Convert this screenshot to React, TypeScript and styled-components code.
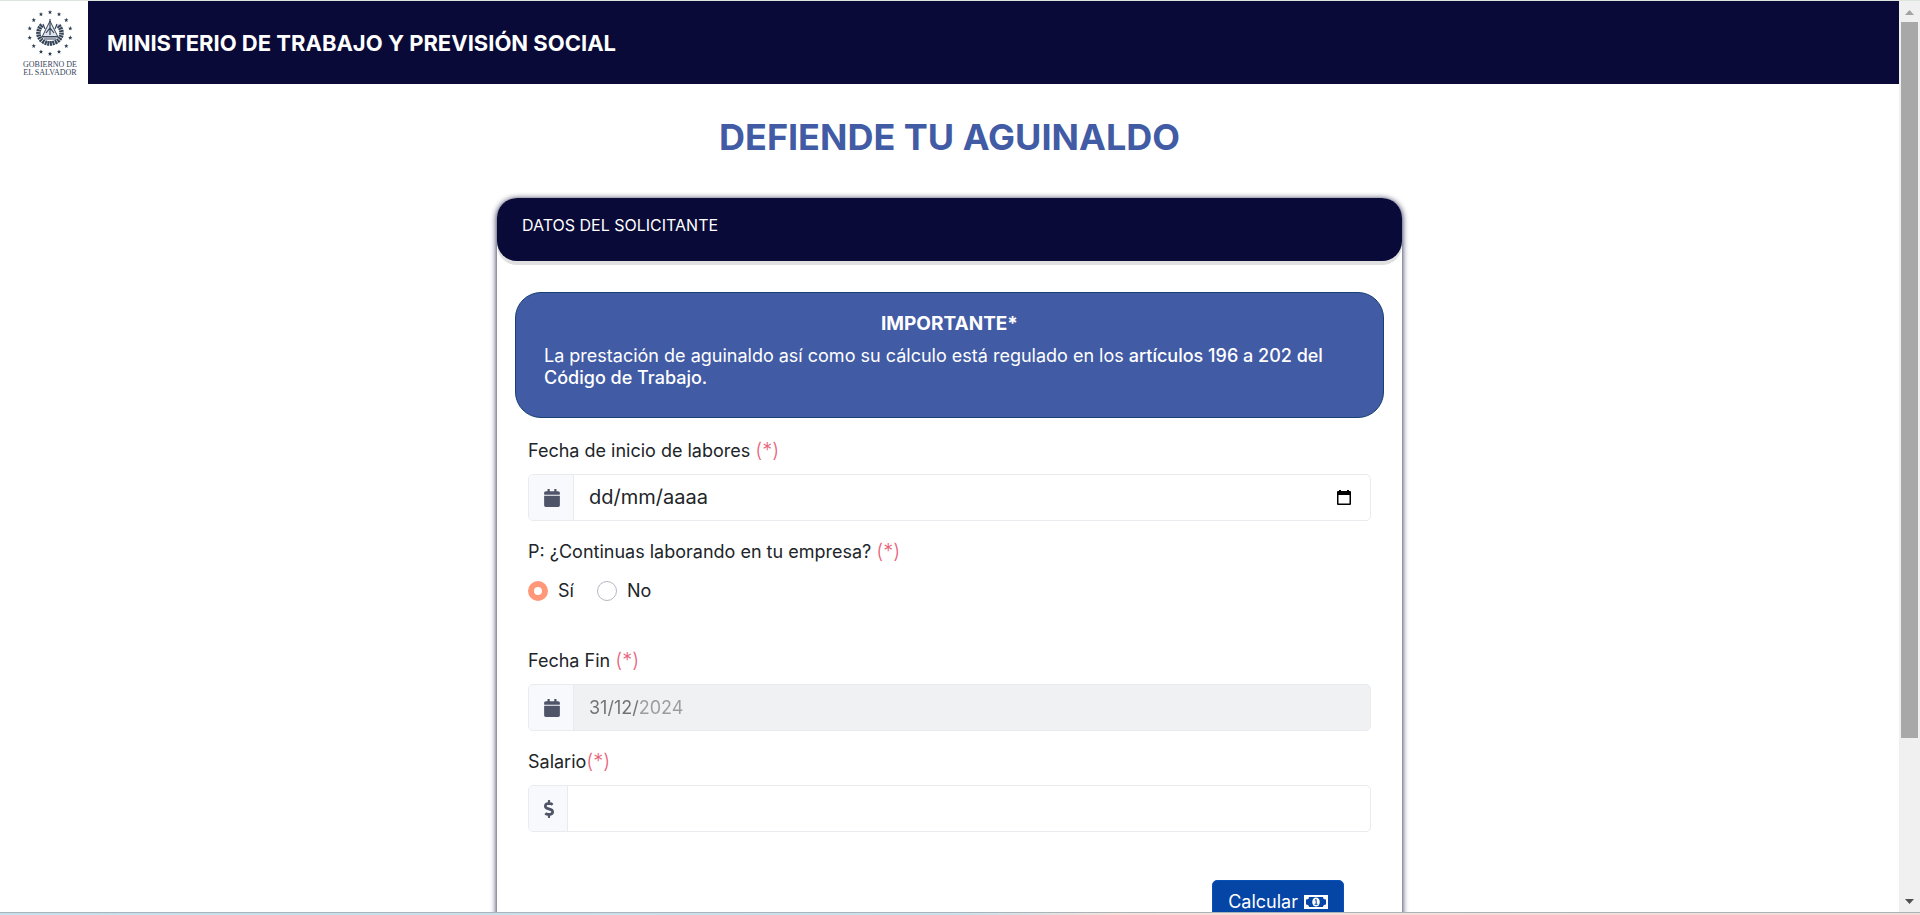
import React, { useState } from "react";
import styled, { createGlobalStyle } from "styled-components";
import { FaCalendar, FaDollarSign } from "react-icons/fa";

const GlobalStyle = createGlobalStyle`
  * { box-sizing: border-box; }
  body { margin: 0; background: #fff; }
  body, button, input { font-family: Inter, "Noto Sans", sans-serif; font-size: 18px; color: #212529; }
`;

const Shell = styled.div`
  display: grid;
  grid-template: minmax(0, 1fr) auto / minmax(0, 1fr) 21px;
  height: 100vh;
  border-top: 1px solid #dde3dd;
`;

const Viewport = styled.div`
  overflow: hidden;
`;

const EdgeStrip = styled.div`
  grid-column: 1 / -1;
  height: 3px;
  border-top: 1px solid #aab4ba;
  background: linear-gradient(90deg, #c3e0ec 0%, #c9e2ec 50%, #f6e0d8 58%, #f3dcd4 100%);
`;

const ScrollTrack = styled.div`
  display: flex;
  flex-direction: column;
  align-items: center;
  background: #f0f0f0;
`;

const ScrollArrow = styled.svg`
  width: 9px;
  height: 21px;
  flex: none;
`;

const ScrollThumb = styled.div`
  width: 17px;
  flex: 717 1 0;
  background: #a8a8a8;
`;

const ScrollRest = styled.div`
  flex: 153 1 0;
`;

const TopBar = styled.header`
  display: flex;
  height: 83px;
  background: #090a37;
`;

const LogoBox = styled.a`
  width: 88px;
  flex: none;
  padding: 5px 0 0 20px;
  background: #fff;
`;

const Ministry = styled.strong`
  align-self: center;
  margin-left: 19px;
  font-size: 22px;
  line-height: 32px;
  font-weight: 700;
  color: #fff;
`;

const Main = styled.main`
  display: flex;
  flex-direction: column;
  align-items: center;
  padding: 28px 16px;
`;

const PageTitle = styled.h1`
  margin: 0 0 36px;
  font-size: 36px;
  line-height: 50px;
  font-weight: 700;
  color: #415ba5;
`;

const Card = styled.form`
  width: 100%;
  max-width: 905px;
  border-radius: 20px;
  background: #fff;
  box-shadow: 0 1px 6px #090a37;
`;

const CardHeader = styled.h2`
  margin: 0;
  height: 63px;
  padding: 16px 25px;
  border-radius: 20px;
  background: #090a37;
  box-shadow: 0 4px 0 rgba(0, 0, 0, 0.12);
  font-size: 16px;
  line-height: 22px;
  font-weight: 400;
  color: #fff;
`;

const CardBody = styled.div`
  padding: 31px 18px 40px;
`;

const Notice = styled.section`
  height: 126px;
  padding: 20px 28px;
  border: 1px solid #174074;
  border-radius: 26px;
  background: #415ba5;
  color: #fff;
`;

const NoticeTitle = styled.h3`
  margin: 0 0 10px;
  text-align: center;
  font-size: 19px;
  line-height: 22px;
  font-weight: 700;
`;

const NoticeText = styled.p`
  margin: 0;
  line-height: 22px;
  b { font-weight: 500; }
`;

const Fields = styled.div`
  padding: 20px 13px 0;
`;

const Label = styled.label`
  display: block;
  margin-bottom: 10px;
  line-height: 26px;
`;

const Legend = styled.legend`
  padding: 0;
  margin-bottom: 13px;
  line-height: 26px;
`;

const Required = styled.span`
  color: #e8637a;
  font-size: 20px;
  line-height: 20px;
  font-weight: 300;
`;

const Group = styled.div<{ $disabled?: boolean }>`
  display: flex;
  height: 47px;
  margin-bottom: 18px;
  border: 1px solid #e9ebee;
  border-radius: 5px;
  overflow: hidden;
  background: ${(p) => (p.$disabled ? "#eff1f3" : "#fff")};
`;

const Addon = styled.span<{ $icon: number }>`
  display: flex;
  align-items: center;
  padding: 0 13px 0 15px;
  border-right: 1px solid #e9ebee;
  background: #f8f9fc;
  color: #4f5468;
  svg { width: ${(p) => p.$icon}px; height: 18px; }
`;

const TextInput = styled.input`
  flex: 1;
  min-width: 0;
  border: 0;
  outline: 0;
  padding: 0 15px;
  background: transparent;
  &::placeholder { color: #212529; opacity: 1; font-size: 20px; }
  &:disabled {
    color: transparent;
    -webkit-text-fill-color: transparent;
    background: linear-gradient(90deg, #6e7073 65px, #9a9c9f 65px);
    background-clip: text;
    -webkit-background-clip: text;
  }
`;

const PickerButton = styled.button`
  width: 53px;
  padding: 0;
  border: 0;
  background: none;
  line-height: 0;
`;

const Choices = styled.fieldset`
  margin: 0 0 44px;
  padding: 0;
  border: 0;
  min-width: 0;
`;

const ChoiceRow = styled.div`
  display: flex;
  gap: 23px;
`;

const Choice = styled.label`
  display: flex;
  align-items: center;
  gap: 10px;
  line-height: 26px;
`;

const Radio = styled.input`
  appearance: none;
  width: 20px;
  height: 20px;
  margin: 0;
  border: 1px solid #b3b8c2;
  border-radius: 50%;
  background: #fff;
  &:checked { border: 6px solid #ff9779; }
`;

const Actions = styled.div`
  display: flex;
  justify-content: flex-end;
  padding: 30px 27px 0;
`;

const Submit = styled.button`
  display: flex;
  align-items: center;
  gap: 6px;
  height: 43px;
  padding: 0 15px;
  border: 1px solid #0b50b8;
  border-radius: 5px;
  background: #0545a5;
  color: #fff;
`;

const STAR = "M0-2.3.6-.7 2.200-.6.9.3 1.400 2 0 1.100-1.400 2-.9.3-2.200-.6-.6-.7Z";

function Emblem() {
  return (
    <svg width="60" height="74" viewBox="0 0 60 74" role="img" aria-label="Gobierno de El Salvador">
      <g fill="#2c3a4f">
        {Array.from({ length: 14 }, (_, i) => {
          const a = (i * 2 * Math.PI) / 14;
          return <path key={i} d={STAR} transform={`translate(${30 + 20.8 * Math.sin(a)} ${27 - 20.8 * Math.cos(a)})`} />;
        })}
      </g>
      <g fill="none" stroke="#36455a">
        <path d="M22 19c-5 5-5 13 2 17 4 2 8 2 12 0 7-4 7-12 2-17" strokeWidth="4.600" strokeDasharray="2 .6" />
        <path d="M30 15 22 31H38Z" strokeWidth="1" fill="#dfe4ea" />
        <path d="M30 13v16M26 27l4-5 4 5M22 30.500h16M24 33h12M25 23l-2-5M35 23l2-5M27 36h6" strokeWidth="1.200" />
      </g>
      <g fill="#36455a" fontFamily="Liberation Serif, serif" fontSize="8" textAnchor="middle">
        <text x="30" y="61">GOBIERNO DE</text>
        <text x="30" y="69">EL SALVADOR</text>
      </g>
    </svg>
  );
}

function DatePickerIcon() {
  return (
    <svg width="16" height="17" viewBox="0 0 16 17" aria-hidden="true">
      <path fill="#000" fillRule="evenodd" d="M3 1h2v1h6V1h2v1h1q1 0 1 1v12q0 1-1 1H2q-1 0-1-1V3q0-1 1-1h1ZM2.500 6v8.500h11V6Z" />
    </svg>
  );
}

function BillIcon() {
  return (
    <svg width="24" height="14" viewBox="0 0 24 14" aria-hidden="true">
      <path fill="#fff" fillRule="evenodd" d="M0 0h24v14H0ZM5 2Q5 4.500 2 4.500v5Q5 9.500 5 12h14q0-2.500 3-2.500v-5q-3 0-3-2.500Z" />
      <ellipse cx="12" cy="7" rx="3.800" ry="4.500" fill="#fff" />
      <path d="M10.800 5.200 12.200 4.500V9M10.600 9.300h3" stroke="#0545a5" fill="none" />
    </svg>
  );
}

export default function App() {
  const [working, setWorking] = useState("si");
  const [start, setStart] = useState("");
  const [salary, setSalary] = useState("");

  return (
    <>
      <GlobalStyle />
      <Shell>
        <Viewport>
          <TopBar>
            <LogoBox href="#">
              <Emblem />
            </LogoBox>
            <Ministry>MINISTERIO DE TRABAJO Y PREVISIÓN SOCIAL</Ministry>
          </TopBar>
          <Main>
            <PageTitle>DEFIENDE TU AGUINALDO</PageTitle>
            <Card onSubmit={(e) => e.preventDefault()}>
              <CardHeader>DATOS DEL SOLICITANTE</CardHeader>
              <CardBody>
                <Notice>
                  <NoticeTitle>IMPORTANTE*</NoticeTitle>
                  <NoticeText>
                    La prestación de aguinaldo así como su cálculo está regulado en los{" "}
                    <b>artículos 196 a 202 del Código de Trabajo.</b>
                  </NoticeText>
                </Notice>
                <Fields>
                  <Label htmlFor="inicio">
                    Fecha de inicio de labores <Required>(*)</Required>
                  </Label>
                  <Group>
                    <Addon $icon={16}><FaCalendar /></Addon>
                    <TextInput id="inicio" placeholder="dd/mm/aaaa" value={start} onChange={(e) => setStart(e.target.value)} />
                    <PickerButton type="button" aria-label="Abrir calendario"><DatePickerIcon /></PickerButton>
                  </Group>
                  <Choices>
                    <Legend>
                      P: ¿Continuas laborando en tu empresa? <Required>(*)</Required>
                    </Legend>
                    <ChoiceRow>
                      <Choice>
                        <Radio type="radio" name="continua" checked={working === "si"} onChange={() => setWorking("si")} />
                        Sí
                      </Choice>
                      <Choice>
                        <Radio type="radio" name="continua" checked={working === "no"} onChange={() => setWorking("no")} />
                        No
                      </Choice>
                    </ChoiceRow>
                  </Choices>
                  <Label htmlFor="fin">
                    Fecha Fin <Required>(*)</Required>
                  </Label>
                  <Group $disabled>
                    <Addon $icon={16}><FaCalendar /></Addon>
                    <TextInput id="fin" value="31/12/2024" disabled readOnly />
                  </Group>
                  <Label htmlFor="salario">
                    Salario<Required>(*)</Required>
                  </Label>
                  <Group>
                    <Addon $icon={10}><FaDollarSign /></Addon>
                    <TextInput id="salario" inputMode="decimal" value={salary} onChange={(e) => setSalary(e.target.value)} />
                  </Group>
                  <Actions>
                    <Submit type="submit">Calcular <BillIcon /></Submit>
                  </Actions>
                </Fields>
              </CardBody>
            </Card>
          </Main>
        </Viewport>
        <ScrollTrack aria-hidden="true">
          <ScrollArrow viewBox="0 0 9 21"><path fill="#a3a3a3" d="M4.500 9 9 14H0Z" /></ScrollArrow>
          <ScrollThumb />
          <ScrollRest />
          <ScrollArrow viewBox="0 0 9 21"><path fill="#505050" d="M4.500 13 9 8H0Z" /></ScrollArrow>
        </ScrollTrack>
        <EdgeStrip />
      </Shell>
    </>
  );
}
